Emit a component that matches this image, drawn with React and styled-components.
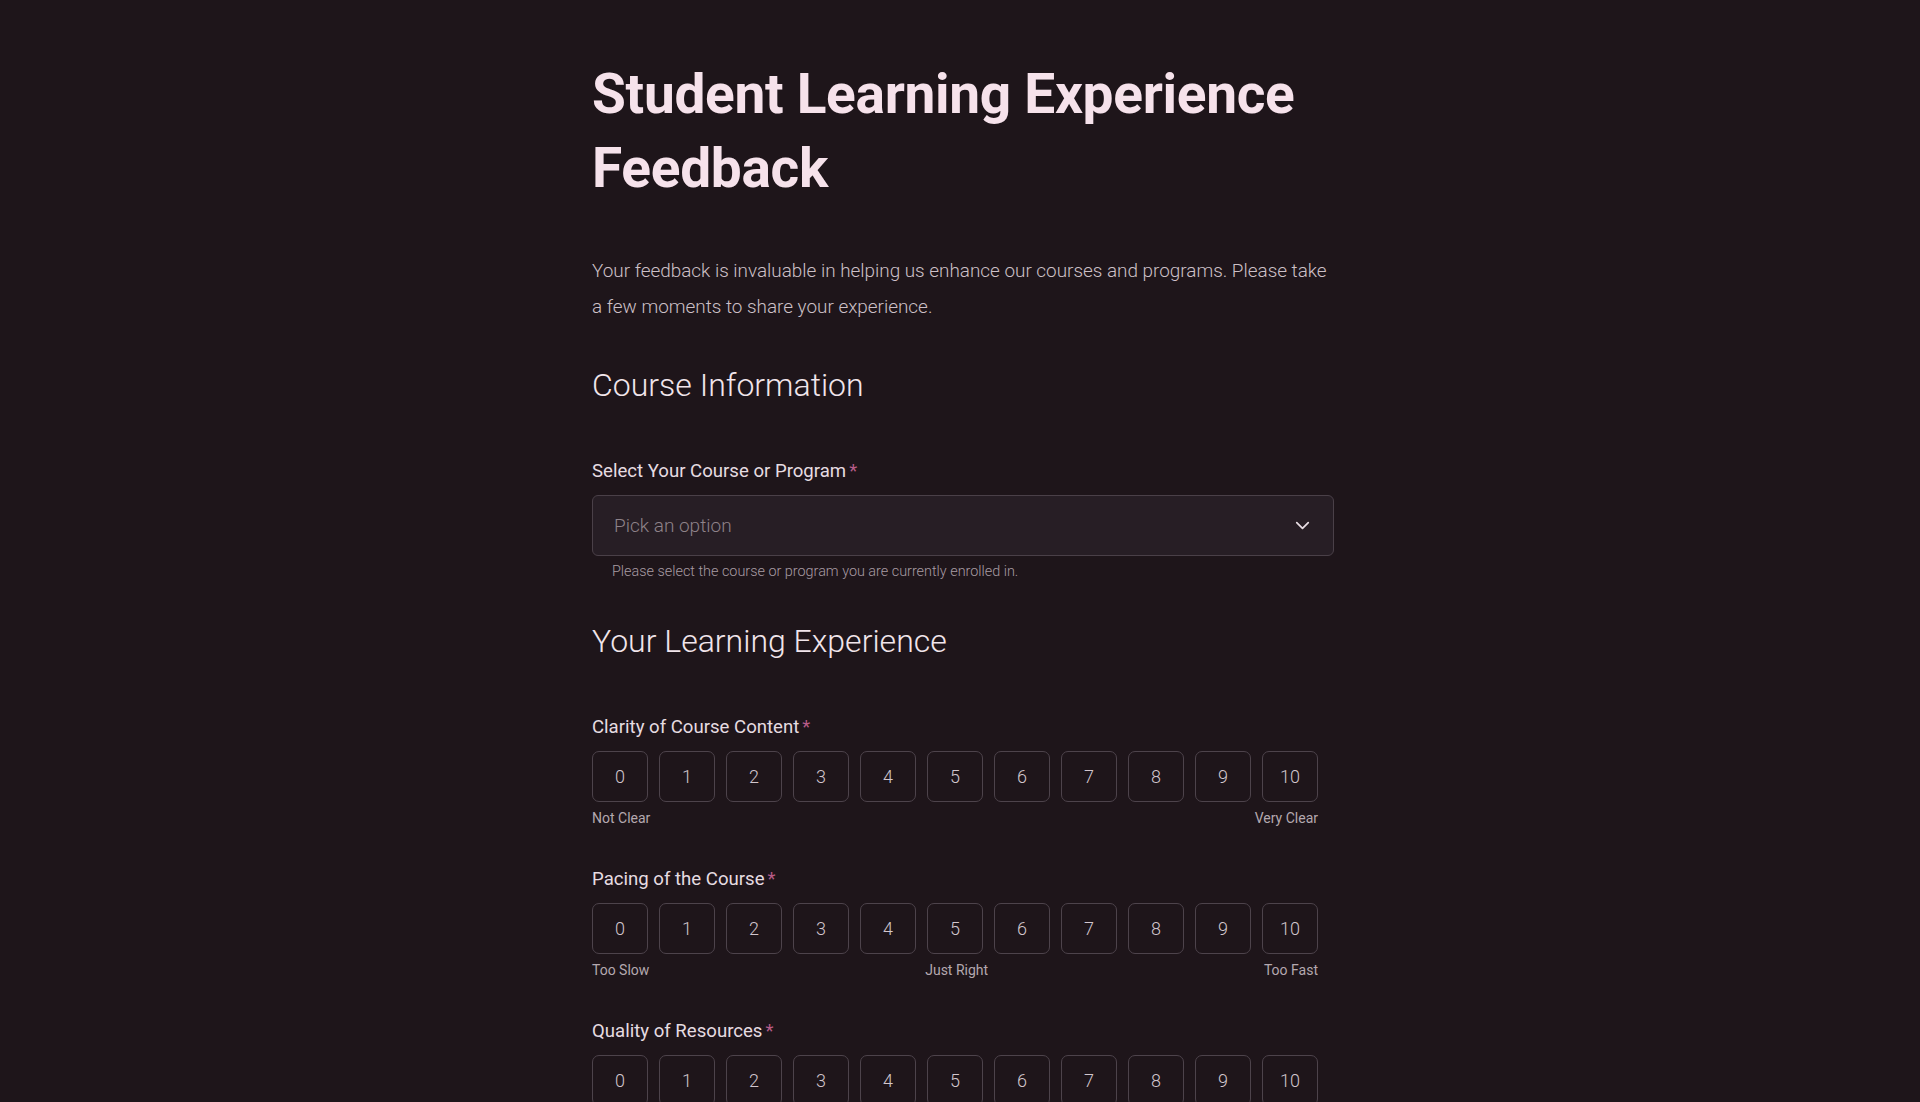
import React from 'react';
import styled, { createGlobalStyle } from 'styled-components';
import { ChevronDown } from 'lucide-react';

const GlobalStyle = createGlobalStyle`
  html, body {
    margin: 0;
    padding: 0;
    background-color: #1e151a;
  }

  body {
    font-family: Roboto, "Noto Sans", sans-serif;
    color: #e8dde3;
  }

  * {
    box-sizing: border-box;
  }
`;

const scales = [
  {
    label: 'Clarity of Course Content',
    marks: ['Not Clear', 'Very Clear'],
  },
  {
    label: 'Pacing of the Course',
    marks: ['Too Slow', 'Just Right', 'Too Fast'],
  },
  {
    label: 'Quality of Resources',
    marks: ['Poor', 'Excellent'],
  },
];

const points = Array.from({ length: 11 }, (_, i) => i);

const Rating = ({ label, marks }) => (
  <Field>
    <Label>
      {label}
      <Required>*</Required>
    </Label>
    <RatingGroup>
      <RatingRow>
        {points.map((n) => (
          <RatingButton key={n} type="button">
            {n}
          </RatingButton>
        ))}
      </RatingRow>
      <MarkRow>
        {marks.map((mark) => (
          <Mark key={mark}>{mark}</Mark>
        ))}
      </MarkRow>
    </RatingGroup>
  </Field>
);

const App = () => (
  <>
    <GlobalStyle />
    <Page>
      <Form>
        <Title>Student Learning Experience Feedback</Title>

        <Intro>
          Your feedback is invaluable in helping us enhance our courses and
          programs. Please take a few moments to share your experience.
        </Intro>

        <SectionTitle>Course Information</SectionTitle>

        <Field>
          <Label>
            Select Your Course or Program
            <Required>*</Required>
          </Label>
          <Select type="button">
            <Placeholder>Pick an option</Placeholder>
            <ChevronDown size={23} strokeWidth={1.8} />
          </Select>
          <Hint>Please select the course or program you are currently enrolled in.</Hint>
        </Field>

        <SectionTitle>Your Learning Experience</SectionTitle>

        {scales.map((scale) => (
          <Rating key={scale.label} label={scale.label} marks={scale.marks} />
        ))}
      </Form>
    </Page>
  </>
);

const Page = styled.div`
  min-height: 100vh;
  padding: 58px 0 80px;
`;

const Form = styled.main`
  width: 742px;
  margin: 0 calc(50% - 374px) 0 calc(50% - 368px);
  display: flex;
  flex-direction: column;
`;

const Title = styled.h1`
  margin: 0 0 48px;
  font-size: 55px;
  line-height: 73.5px;
  font-weight: 700;
  letter-spacing: -0.3px;
  color: #f6e2eb;
`;

const Intro = styled.p`
  margin: 0 0 40px;
  font-size: 18.9px;
  line-height: 36px;
  font-weight: 300;
  color: #cdc0c7;
`;

const SectionTitle = styled.h2`
  margin: 0 0 54px;
  font-size: 32px;
  line-height: 40px;
  font-weight: 300;
  color: #f1e5eb;
`;

const Field = styled.div`
  display: flex;
  flex-direction: column;
  margin-bottom: 40px;
`;

const Label = styled.label`
  font-size: 18.6px;
  line-height: 24px;
  font-weight: 400;
  color: #e6dce1;
  margin-bottom: 12px;
`;

const Required = styled.span`
  color: #b75c88;
  margin-left: 3px;
`;

const Select = styled.button`
  display: flex;
  align-items: center;
  justify-content: space-between;
  height: 61px;
  padding: 0 19px 0 21px;
  background-color: #271e25;
  border: 1.5px solid #4a4048;
  border-radius: 6px;
  color: #e8dde3;
  font-family: inherit;
  cursor: pointer;
`;

const Placeholder = styled.span`
  font-size: 19px;
  font-weight: 300;
  color: #8e8289;
`;

const Hint = styled.span`
  margin-top: 7px;
  padding-left: 20px;
  font-size: 14.4px;
  line-height: 18px;
  font-weight: 300;
  color: #a89ba3;
`;

const RatingGroup = styled.div`
  display: inline-flex;
  flex-direction: column;
  align-self: flex-start;
`;

const RatingRow = styled.div`
  display: flex;
  gap: 11px;
`;

const RatingButton = styled.button`
  width: 56px;
  height: 51px;
  padding: 0;
  background-color: transparent;
  border: 1.5px solid #4d434b;
  border-radius: 7px;
  font-family: inherit;
  font-size: 18px;
  font-weight: 300;
  color: #d2c6cd;
  cursor: pointer;
`;

const MarkRow = styled.div`
  display: flex;
  justify-content: space-between;
  margin-top: 7px;
`;

const Mark = styled.span`
  font-size: 14px;
  line-height: 18px;
  font-weight: 400;
  color: #b4a8af;
`;

export default App;
